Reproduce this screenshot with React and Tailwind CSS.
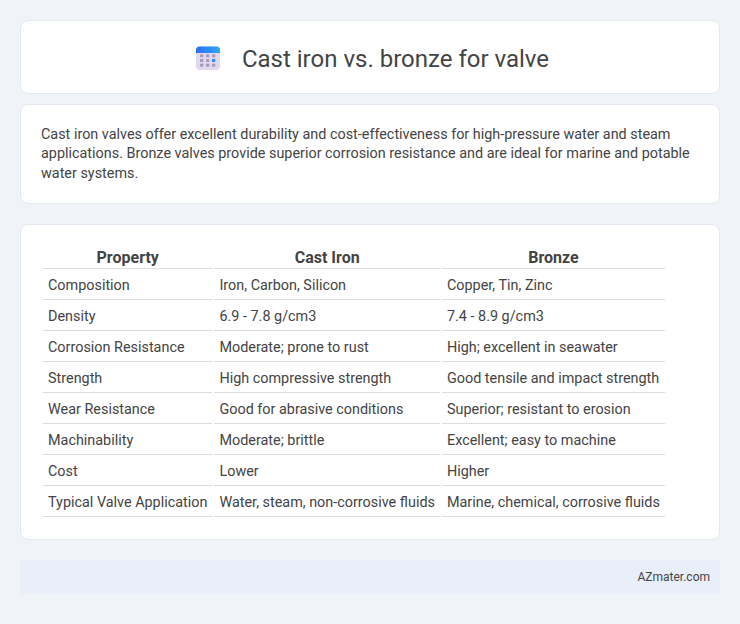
const ROWS = [
  ['Composition', 'Iron, Carbon, Silicon', 'Copper, Tin, Zinc'],
  ['Density', '6.9 - 7.8 g/cm3', '7.4 - 8.9 g/cm3'],
  ['Corrosion Resistance', 'Moderate; prone to rust', 'High; excellent in seawater'],
  ['Strength', 'High compressive strength', 'Good tensile and impact strength'],
  ['Wear Resistance', 'Good for abrasive conditions', 'Superior; resistant to erosion'],
  ['Machinability', 'Moderate; brittle', 'Excellent; easy to machine'],
  ['Cost', 'Lower', 'Higher'],
  ['Typical Valve Application', 'Water, steam, non-corrosive fluids', 'Marine, chemical, corrosive fluids'],
]

function CalendarIcon() {
  const cells = []
  for (let y = 0; y < 3; y++) {
    for (let x = 0; x < 3; x++) {
      const blue = x === 2 && y === 1
      cells.push(
        <rect key={`${x}-${y}`} x={4 + x * 6} y={8.3 + y * 4.7} width="3.3" height="3" fill={blue ? '#2f8cf0' : '#a79db8'} />
      )
    }
  }
  return (
    <svg width="24" height="24" viewBox="0 0 24 24" className="shrink-0">
      <defs>
        <linearGradient id="top" x1="0" y1="0" x2="1" y2="0">
          <stop offset="0" stopColor="#2e6ff2" />
          <stop offset="1" stopColor="#2fa6f5" />
        </linearGradient>
      </defs>
      <rect x="0" y="0.5" width="24" height="23.5" rx="3.5" fill="#e3d9ee" />
      <path d="M0 7V4a3.5 3.5 0 0 1 3.5-3.5h17A3.5 3.5 0 0 1 24 4v3z" fill="url(#top)" />
      {cells}
    </svg>
  )
}

export default function App() {
  return (
    <div className="min-h-[624px] bg-[#f0f4f9] p-5 font-['Roboto',sans-serif] text-[#444444]">
      <div className="mb-2.5 flex h-[74px] items-center justify-center gap-[22px] rounded-lg border border-[#e3e8f0] bg-white pt-[2px] pl-[5px]">
        <CalendarIcon />
        <h1 className="pt-[2px] text-2xl font-normal">Cast iron vs. bronze for valve</h1>
      </div>

      <div className="mb-5 rounded-lg border border-[#e3e8f0] bg-white px-5 pt-5 pb-[19.3px] text-[14.4px] leading-[19.44px]">
        Cast iron valves offer excellent durability and cost-effectiveness for high-pressure water and steam applications. Bronze valves provide superior corrosion resistance and are ideal for marine and potable water systems.
      </div>

      <div className="mb-5 rounded-lg border border-[#e3e8f0] bg-white px-5 py-5">
        <table className="border-separate border-spacing-[2px] text-[14.4px]">
          <thead>
            <tr>
              <th className="border-b border-[#dddddd] px-[5px] pt-[2px] pb-[1px] text-center text-base leading-[18px] font-bold">Property</th>
              <th className="border-b border-[#dddddd] px-[5px] pt-[2px] pb-[1px] text-center text-base leading-[18px] font-bold">Cast Iron</th>
              <th className="border-b border-[#dddddd] px-[5px] pt-[2px] pb-[1px] text-center text-base leading-[18px] font-bold">Bronze</th>
            </tr>
          </thead>
          <tbody>
            {ROWS.map((row) => (
              <tr key={row[0]}>
                {row.map((cell) => (
                  <td key={cell} className="border-b border-[#dddddd] px-[5px] pt-[6px] pb-[4px] text-left leading-[18px]">{cell}</td>
                ))}
              </tr>
            ))}
          </tbody>
        </table>
      </div>

      <div className="flex h-[34px] items-center justify-end bg-[#e8eff8] px-2.5 text-xs">AZmater.com</div>
    </div>
  )
}
